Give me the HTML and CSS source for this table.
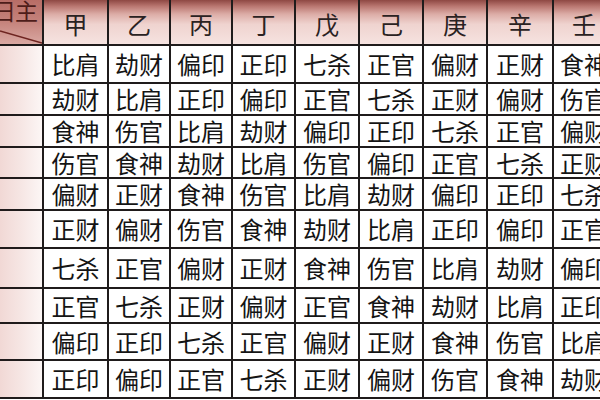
FILE: index.html
```html
<!DOCTYPE html>
<html lang="zh">
<head>
<meta charset="utf-8">
<title>十神表</title>
<link rel="stylesheet" href="styles.css">
</head>
<body>
<div class="table">
  <div class="corner"><span class="corner-text">日主</span><svg class="diag" viewBox="0 0 42 44" preserveAspectRatio="none"><line x1="0" y1="31" x2="42" y2="43" stroke="#6e2420" stroke-width="1.6"/></svg></div>
  <div class="hd">甲</div><div class="hd">乙</div><div class="hd">丙</div><div class="hd">丁</div><div class="hd">戊</div><div class="hd">己</div><div class="hd">庚</div><div class="hd">辛</div><div class="hd">壬</div>

  <div class="side"></div>
  <div class="c">比肩</div><div class="c">劫财</div><div class="c">偏印</div><div class="c">正印</div><div class="c">七杀</div><div class="c">正官</div><div class="c">偏财</div><div class="c">正财</div><div class="c">食神</div>

  <div class="side"></div>
  <div class="c">劫财</div><div class="c">比肩</div><div class="c">正印</div><div class="c">偏印</div><div class="c">正官</div><div class="c">七杀</div><div class="c">正财</div><div class="c">偏财</div><div class="c">伤官</div>

  <div class="side"></div>
  <div class="c">食神</div><div class="c">伤官</div><div class="c">比肩</div><div class="c">劫财</div><div class="c">偏印</div><div class="c">正印</div><div class="c">七杀</div><div class="c">正官</div><div class="c">偏财</div>

  <div class="side"></div>
  <div class="c">伤官</div><div class="c">食神</div><div class="c">劫财</div><div class="c">比肩</div><div class="c">伤官</div><div class="c">偏印</div><div class="c">正官</div><div class="c">七杀</div><div class="c">正财</div>

  <div class="side"></div>
  <div class="c">偏财</div><div class="c">正财</div><div class="c">食神</div><div class="c">伤官</div><div class="c">比肩</div><div class="c">劫财</div><div class="c">偏印</div><div class="c">正印</div><div class="c">七杀</div>

  <div class="side"></div>
  <div class="c">正财</div><div class="c">偏财</div><div class="c">伤官</div><div class="c">食神</div><div class="c">劫财</div><div class="c">比肩</div><div class="c">正印</div><div class="c">偏印</div><div class="c">正官</div>

  <div class="side"></div>
  <div class="c">七杀</div><div class="c">正官</div><div class="c">偏财</div><div class="c">正财</div><div class="c">食神</div><div class="c">伤官</div><div class="c">比肩</div><div class="c">劫财</div><div class="c">偏印</div>

  <div class="side"></div>
  <div class="c">正官</div><div class="c">七杀</div><div class="c">正财</div><div class="c">偏财</div><div class="c">正官</div><div class="c">食神</div><div class="c">劫财</div><div class="c">比肩</div><div class="c">正印</div>

  <div class="side"></div>
  <div class="c">偏印</div><div class="c">正印</div><div class="c">七杀</div><div class="c">正官</div><div class="c">偏财</div><div class="c">正财</div><div class="c">食神</div><div class="c">伤官</div><div class="c">比肩</div>

  <div class="side"></div>
  <div class="c">正印</div><div class="c">偏印</div><div class="c">正官</div><div class="c">七杀</div><div class="c">正财</div><div class="c">偏财</div><div class="c">伤官</div><div class="c">食神</div><div class="c">劫财</div>
</div>
</body>
</html>
```

FILE: styles.css
```css
html, body {
  margin: 0;
  padding: 0;
  background: #ffffff;
  overflow: hidden;
  width: 600px;
  height: 400px;
}

.table {
  display: grid;
  width: 614px;
  grid-template-columns: 42px 63px 60px 60px 61px 62px 62px 62px 64px 60px;
  grid-template-rows: 44px 36px 30px 30px 29px 30px 36px 38px 33px 35px 36px;
  gap: 2px;
  padding-bottom: 2px;
  background: #1f1b1b;
  font-family: "Noto Sans CJK SC", "Noto Sans CJK JP", sans-serif;
}

.corner {
  position: relative;
  overflow: hidden;
  background: linear-gradient(#b86d66 0%, #c5837c 50%, #d9a8a2 100%);
}

.corner-text {
  display: block;
  margin: -3px 0 0 -7px;
  font-size: 23px;
  line-height: 26px;
  letter-spacing: -1px;
  color: #4e1d1a;
  white-space: nowrap;
}

.diag {
  position: absolute;
  left: 0;
  top: 0;
  width: 42px;
  height: 44px;
}

.hd {
  display: flex;
  align-items: center;
  justify-content: center;
  padding-top: 3px;
  font-size: 24px;
  color: #2a2222;
  background: linear-gradient(#8e4843 0%, #b97670 14%, #dcaca6 32%, #efd3cf 55%, #f6e3e0 100%);
}

.side {
  background: linear-gradient(to right, #f1d8d5 0%, #f6e6e4 50%, #fcf6f5 100%);
}

.c {
  display: flex;
  align-items: center;
  justify-content: center;
  background: #ffffff;
  font-size: 24px;
  line-height: 1;
  color: #141414;
  white-space: nowrap;
}
```
